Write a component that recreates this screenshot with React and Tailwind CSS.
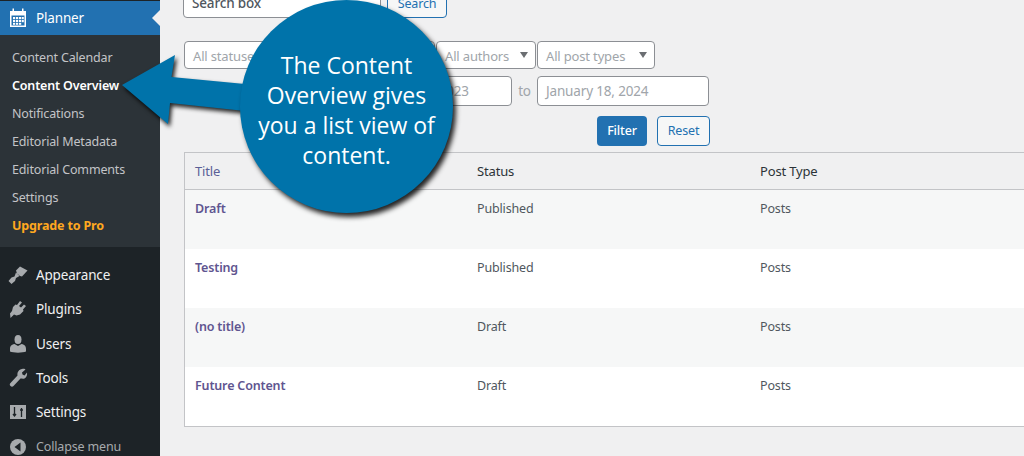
import React from 'react';

const subItems = [
  { label: 'Content Calendar', cls: 'text-[#c3c4c7]' },
  { label: 'Content Overview', cls: 'text-white font-semibold' },
  { label: 'Notifications', cls: 'text-[#c3c4c7]' },
  { label: 'Editorial Metadata', cls: 'text-[#c3c4c7]' },
  { label: 'Editorial Comments', cls: 'text-[#c3c4c7]' },
  { label: 'Settings', cls: 'text-[#c3c4c7]' },
  { label: 'Upgrade to Pro', cls: 'text-[#ffa81f] font-bold' },
];

const rows = [
  { title: 'Draft', status: 'Published', alt: true },
  { title: 'Testing', status: 'Published', alt: false },
  { title: '(no title)', status: 'Draft', alt: true },
  { title: 'Future Content', status: 'Draft', alt: false },
];

const CalendarIcon = () => (
  <svg width="20" height="20" viewBox="0 0 20 20" fill="#fff">
    <path fillRule="evenodd" d="M2 3h2.500V.5H6V3h8V.5h1.500V3H18v16H2V3zm1.500 4.500V17.500h13V7.500h-13z" />
    <rect x="5" y="9" width="2.200" height="2.200" />
    <rect x="8" y="9" width="2.200" height="2.200" />
    <rect x="11" y="9" width="2.200" height="2.200" />
    <rect x="13.800" y="9" width="2" height="2.200" />
    <rect x="5" y="12" width="2.200" height="2.200" />
    <rect x="8" y="12" width="2.200" height="2.200" />
    <rect x="11" y="12" width="2.200" height="2.200" />
    <rect x="13.800" y="12" width="2" height="2.200" />
    <rect x="5" y="15" width="2.200" height="1.800" />
    <rect x="8" y="15" width="2.200" height="1.800" />
    <rect x="11" y="15" width="2.200" height="1.800" />
  </svg>
);

const BrushIcon = () => (
  <svg width="20" height="20" viewBox="0 0 20 20" fill="#a7aaad">
    <path d="M8 5.500 12 1.500 19.500 5.500 14 11.500 12 11 9 8.500z" />
    <path d="M8 7.500 11.500 11 8 13 7 16 3.500 19 .5 16 3.500 12.500 6.500 11.500z" />
  </svg>
);

const PlugIcon = () => (
  <svg width="20" height="20" viewBox="0 0 20 20" fill="#a7aaad">
    <path d="M12 2 14 3.500 11 7 13 8.500 16 5.500 18 7 15 10.500 15.500 12 12 15.500 8.500 16.500 6 15.500 2.500 19 2 14.500 4 12 5 8 7.500 5.500 9 6z" />
  </svg>
);

const UserIcon = () => (
  <svg width="20" height="20" viewBox="0 0 20 20" fill="#a7aaad">
    <ellipse cx="10" cy="5.500" rx="3.500" ry="4.500" />
    <path d="M6.500 10 10 12 13.500 10C17 10.500 18 12.500 18 15V17.500C15 19 5 19 2 17.500V15C2 12.500 3 10.500 6.500 10z" />
  </svg>
);

const WrenchIcon = () => (
  <svg width="20" height="20" viewBox="0 0 20 20" fill="#a7aaad">
    <path d="M14 1C16 .5 17 1 17.500 1.500L14 4.500 14.500 6.500 16.500 7.500 19 4.500C19.500 7 18.500 9.500 16.500 10.500 15 11 13.500 10.500 12.500 10.500L5.500 18C4.500 19 3.500 19 2.500 18 1.500 17 1.500 16 2.500 15L9.500 7.500C9 4 11 1.500 14 1z" />
  </svg>
);

const SlidersIcon = () => (
  <svg width="20" height="20" viewBox="0 0 20 20">
    <rect x="2" y="3" width="16" height="14" fill="#a7aaad" />
    <path d="M6.500 5v9M5 12l1.500 2 1.500-2M13.500 6v9M12 8h3" stroke="#1d2327" strokeWidth="1.300" fill="none" />
  </svg>
);

const CollapseIcon = () => (
  <svg width="20" height="20" viewBox="0 0 20 20">
    <circle cx="10" cy="10" r="8" fill="#a7aaad" />
    <path d="M12.500 5.500v9L6.500 10z" fill="#1d2327" />
  </svg>
);

const mainItems = [
  { label: 'Appearance', Icon: BrushIcon },
  { label: 'Plugins', Icon: PlugIcon },
  { label: 'Users', Icon: UserIcon },
  { label: 'Tools', Icon: WrenchIcon },
  { label: 'Settings', Icon: SlidersIcon },
];

const Sidebar = () => (
  <aside className="w-[160px] shrink-0 bg-[#1d2327] text-[13.500px] pt-px">
    <div className="relative h-[34px] bg-[#2271b1] text-white flex items-center pl-[8px] gap-[8px]">
      <CalendarIcon />
      <span>Planner</span>
      {/* notch pointing at the page */}
      <div className="absolute right-0 top-[9px] w-0 h-0 border-y-[8px] border-y-transparent border-r-[8px] border-r-[#f0f0f1]" />
    </div>
    <ul className="bg-[#2c3338] h-[212px] pt-[9px] text-[12.500px]">
      {subItems.map((item) => (
        <li key={item.label} className={`h-[28px] leading-[28px] pl-[12px] whitespace-nowrap ${item.cls}`}>
          {item.label}
        </li>
      ))}
    </ul>
    <ul className="pt-[11px] text-[#f0f0f1]">
      {mainItems.map(({ label, Icon }) => (
        <li key={label} className="h-[34.300px] flex items-center pl-[8px] gap-[8px]">
          <Icon />
          <span>{label}</span>
        </li>
      ))}
      <li className="h-[34px] mt-[1px] flex items-center pl-[8px] gap-[8px] text-[12.500px] text-[#a7aaad]">
        <CollapseIcon />
        <span>Collapse menu</span>
      </li>
    </ul>
  </aside>
);

const SelectBox = ({ width, label }) => (
  <div className={`${width} h-[28px] shrink-0 bg-white border border-[#8c8f94] rounded-[4px] flex items-center justify-between pl-[8px] pr-[7px] text-[13px] text-[#a0a5aa] whitespace-nowrap`}>
    <span className="pt-[3px]">{label}</span>
    <span className="w-0 h-0 border-x-[4px] border-x-transparent border-t-[6px] border-t-[#6b6e72]" />
  </div>
);

const Callout = () => (
  <div className="absolute left-[120px] top-0 w-[340px] h-[220px]">
    <svg width="130" height="80" viewBox="0 0 130 80" className="absolute left-0 top-[52px] drop-shadow-[2px_3px_2px_rgba(0,0,0,0.85)]">
      <path d="M2 33 55 3 51.500 25 125 32V59L50 51 48 72z" fill="#0073aa" />
    </svg>
    <div className="absolute left-[120px] top-0 w-[213px] h-[213px] rounded-full bg-[#0073aa] shadow-[3px_4px_5px_rgba(0,0,0,0.85)] flex items-center justify-center pt-[7px] text-white text-center text-[23px] leading-[30px] tracking-normal font-['Open_Sans',sans-serif]">
      <p>The Content<br />Overview gives<br />you a list view of<br />content.</p>
    </div>
  </div>
);

const App = () => (
  <div className="relative flex h-[456px] w-[1024px] overflow-hidden bg-[#f0f0f1] font-['Noto_Sans','Open_Sans',sans-serif] tracking-[-0.01em]">
    <Sidebar />
    <main className="flex-1 min-w-0 pl-[24px] text-[12.500px]">
      <div className="-mt-[12px] h-[30px] flex -ml-px">
        <div className="w-[198px] bg-white border border-[#8c8f94] rounded-[4px] pl-[8px] pt-[1px] flex items-center text-[13.500px] font-medium text-[#50575e]">Search box</div>
        <div className="ml-[6px] w-[60px] bg-[#f6f7f7] border border-[#2271b1] rounded-[4px] flex items-center justify-center text-[#2271b1] pt-[2px]">Search</div>
      </div>

      <div className="mt-[23px] flex">
        <SelectBox width="w-[116px]" label="All statuses" />
        <div className="w-[134px] h-[28px] shrink-0 bg-white border border-[#8c8f94] rounded-[4px] ml-px" />
        <div className="ml-px"><SelectBox width="w-[100px]" label="All authors" /></div>
        <div className="ml-px"><SelectBox width="w-[118px]" label="All post types" /></div>
      </div>

      <div className="mt-[7px] h-[30px] flex items-center pl-[156px] text-[13.500px] text-[#a0a5aa]">
        <div className="w-[172px] h-full bg-white border border-[#8c8f94] rounded-[4px] pl-[8px] pt-[1px] flex items-center whitespace-nowrap">December 18, 2023</div>
        <span className="w-[25px] text-center pt-[1px]">to</span>
        <div className="w-[172px] h-full bg-white border border-[#8c8f94] rounded-[4px] pl-[8px] pt-[1px] flex items-center whitespace-nowrap">January 18, 2024</div>
      </div>

      <div className="mt-[10px] h-[30px] w-[526px] flex justify-end gap-[10px]">
        <div className="w-[50px] bg-[#2271b1] rounded-[4px] text-white flex items-center justify-center font-medium">Filter</div>
        <div className="w-[53px] bg-[#f6f7f7] border border-[#2271b1] rounded-[4px] text-[#2271b1] flex items-center justify-center">Reset</div>
      </div>

      <div className="mt-[6px] w-[900px] border border-[#c3c4c7] bg-white">
        <div className="h-[37px] bg-[#f0f0f1] border-b border-[#c3c4c7] grid grid-cols-[282px_283px_1fr] items-center pl-[10px] pt-[2px] text-[13px] text-[#2c3338]">
          <span className="text-[#5b5f97]">Title</span>
          <span>Status</span>
          <span>Post Type</span>
        </div>
        {rows.map((row) => (
          <div key={row.title} className={`h-[59px] grid grid-cols-[282px_283px_1fr] pl-[10px] pt-[10px] text-[#50575e] ${row.alt ? 'bg-[#f6f7f7]' : 'bg-white'}`}>
            <span className="font-semibold text-[#5f5590]">{row.title}</span>
            <span>{row.status}</span>
            <span>Posts</span>
          </div>
        ))}
      </div>
    </main>
    <Callout />
  </div>
);

export default App;
